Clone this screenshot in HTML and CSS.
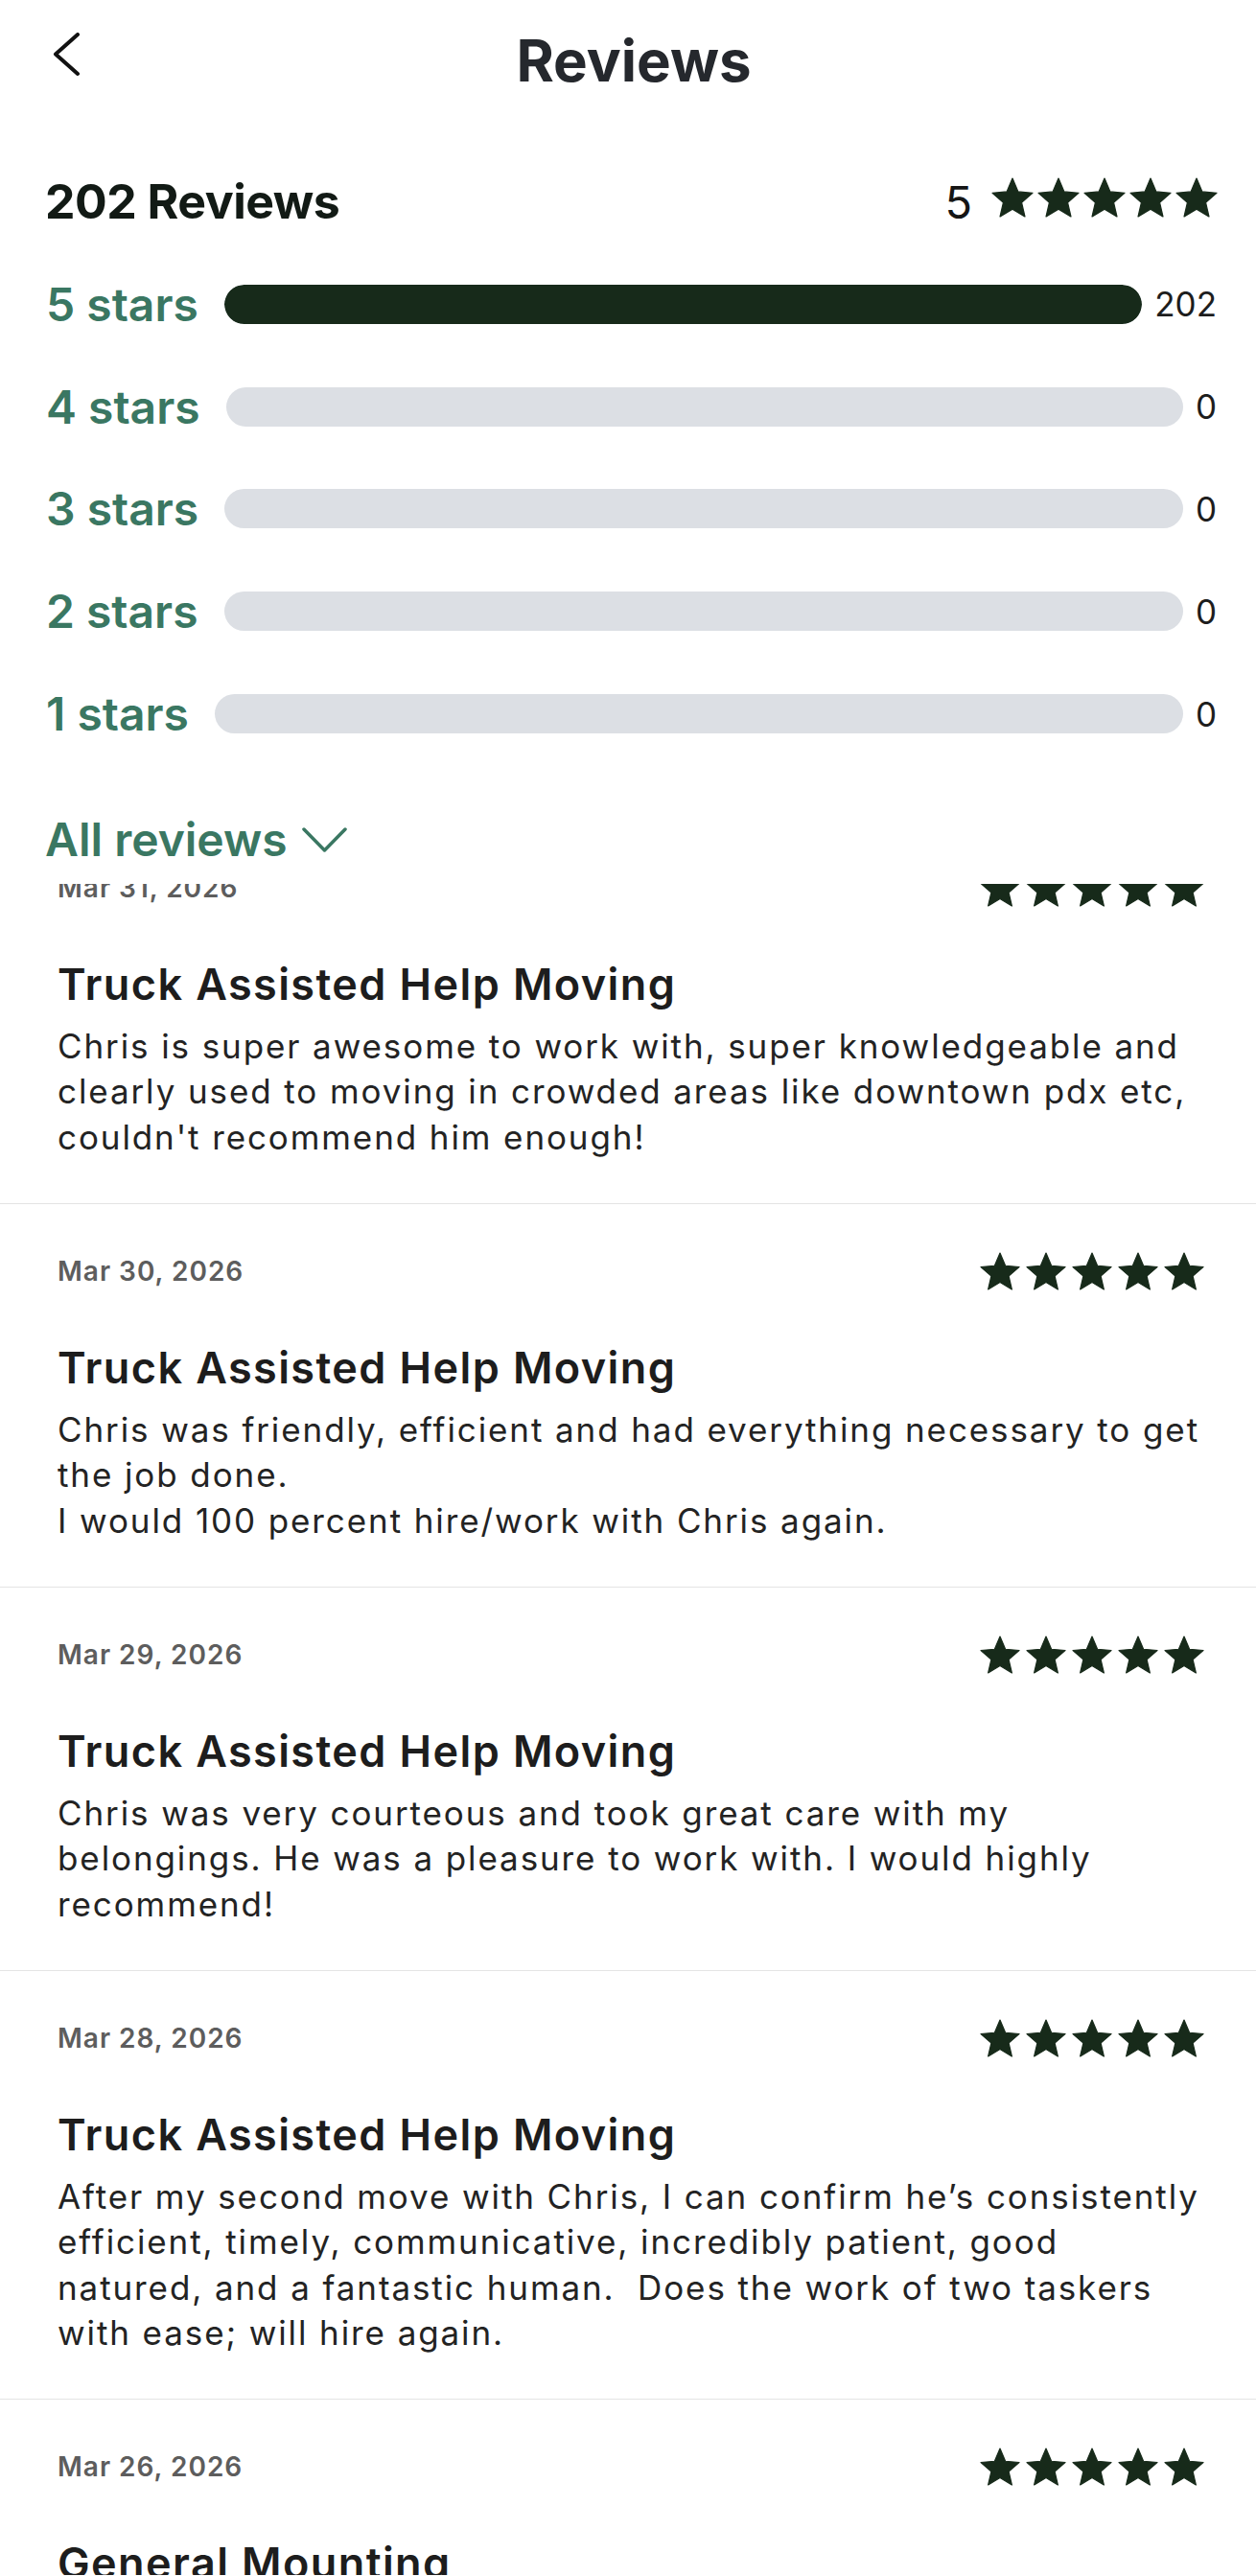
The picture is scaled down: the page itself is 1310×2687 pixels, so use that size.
FILE: index.html
```html
<!DOCTYPE html>
<html lang="en">

<head>
    <meta charset="utf-8" />
    <title>Reviews</title>
    <link rel="stylesheet" href="styles.css">
</head>

<body>
    <div class="page">
        <header class="topbar">
            <svg class="back" width="30" height="46" viewBox="0 0 30 46">
                <polyline points="26,2 3,22.5 26,43" />
            </svg>
            <h1 class="page-title">Reviews</h1>
            <span></span>
        </header>

        <div class="summary">
            <div class="summary-count">202 Reviews</div>
            <div class="summary-score">
                <span class="score-num">5</span>
                <div class="stars big">
                    <svg viewBox="1.5 1.5 21 20"><path d="M12 17.27L18.18 21l-1.64-7.03L22 9.24l-7.19-.61L12 2 9.19 8.63 2 9.24l5.46 4.73L5.82 21z" /></svg>
                    <svg viewBox="1.5 1.5 21 20"><path d="M12 17.27L18.18 21l-1.64-7.03L22 9.24l-7.19-.61L12 2 9.19 8.63 2 9.24l5.46 4.73L5.82 21z" /></svg>
                    <svg viewBox="1.5 1.5 21 20"><path d="M12 17.27L18.18 21l-1.64-7.03L22 9.24l-7.19-.61L12 2 9.19 8.63 2 9.24l5.46 4.73L5.82 21z" /></svg>
                    <svg viewBox="1.5 1.5 21 20"><path d="M12 17.27L18.18 21l-1.64-7.03L22 9.24l-7.19-.61L12 2 9.19 8.63 2 9.24l5.46 4.73L5.82 21z" /></svg>
                    <svg viewBox="1.5 1.5 21 20"><path d="M12 17.27L18.18 21l-1.64-7.03L22 9.24l-7.19-.61L12 2 9.19 8.63 2 9.24l5.46 4.73L5.82 21z" /></svg>
                </div>
            </div>
        </div>

        <div class="breakdown">
            <div class="bar-row">
                <span class="bar-label">5 stars</span>
                <div class="bar"><div class="bar-fill" style="width: 100%"></div></div>
                <span class="bar-count">202</span>
            </div>
            <div class="bar-row">
                <span class="bar-label">4 stars</span>
                <div class="bar"><div class="bar-fill" style="width: 0%"></div></div>
                <span class="bar-count">0</span>
            </div>
            <div class="bar-row">
                <span class="bar-label">3 stars</span>
                <div class="bar"><div class="bar-fill" style="width: 0%"></div></div>
                <span class="bar-count">0</span>
            </div>
            <div class="bar-row">
                <span class="bar-label">2 stars</span>
                <div class="bar"><div class="bar-fill" style="width: 0%"></div></div>
                <span class="bar-count">0</span>
            </div>
            <div class="bar-row">
                <span class="bar-label">1 stars</span>
                <div class="bar"><div class="bar-fill" style="width: 0%"></div></div>
                <span class="bar-count">0</span>
            </div>
        </div>

        <div class="filter">
            <span>All reviews</span>
            <svg class="chev" width="47" height="28" viewBox="0 0 47 28">
                <polyline points="2,3 23.5,25 45,3" />
            </svg>
        </div>

        <div class="list">
            <div class="list-inner">
                <div class="review">
                    <div class="review-top">
                        <span class="review-date">Mar 31, 2026</span>
                        <div class="stars small">
                            <svg viewBox="1.5 1.5 21 20"><path d="M12 17.27L18.18 21l-1.64-7.03L22 9.24l-7.19-.61L12 2 9.19 8.63 2 9.24l5.46 4.73L5.82 21z" /></svg>
                            <svg viewBox="1.5 1.5 21 20"><path d="M12 17.27L18.18 21l-1.64-7.03L22 9.24l-7.19-.61L12 2 9.19 8.63 2 9.24l5.46 4.73L5.82 21z" /></svg>
                            <svg viewBox="1.5 1.5 21 20"><path d="M12 17.27L18.18 21l-1.64-7.03L22 9.24l-7.19-.61L12 2 9.19 8.63 2 9.24l5.46 4.73L5.82 21z" /></svg>
                            <svg viewBox="1.5 1.5 21 20"><path d="M12 17.27L18.18 21l-1.64-7.03L22 9.24l-7.19-.61L12 2 9.19 8.63 2 9.24l5.46 4.73L5.82 21z" /></svg>
                            <svg viewBox="1.5 1.5 21 20"><path d="M12 17.27L18.18 21l-1.64-7.03L22 9.24l-7.19-.61L12 2 9.19 8.63 2 9.24l5.46 4.73L5.82 21z" /></svg>
                        </div>
                    </div>
                    <h2 class="review-title">Truck Assisted Help Moving</h2>
                    <p class="review-body">Chris is super awesome to work with, super knowledgeable and clearly used to moving in crowded areas like downtown pdx etc, couldn't recommend him enough!</p>
                </div>

                <div class="review">
                    <div class="review-top">
                        <span class="review-date">Mar 30, 2026</span>
                        <div class="stars small">
                            <svg viewBox="1.5 1.5 21 20"><path d="M12 17.27L18.18 21l-1.64-7.03L22 9.24l-7.19-.61L12 2 9.19 8.63 2 9.24l5.46 4.73L5.82 21z" /></svg>
                            <svg viewBox="1.5 1.5 21 20"><path d="M12 17.27L18.18 21l-1.64-7.03L22 9.24l-7.19-.61L12 2 9.19 8.63 2 9.24l5.46 4.73L5.82 21z" /></svg>
                            <svg viewBox="1.5 1.5 21 20"><path d="M12 17.27L18.18 21l-1.64-7.03L22 9.24l-7.19-.61L12 2 9.19 8.63 2 9.24l5.46 4.73L5.82 21z" /></svg>
                            <svg viewBox="1.5 1.5 21 20"><path d="M12 17.27L18.18 21l-1.64-7.03L22 9.24l-7.19-.61L12 2 9.19 8.63 2 9.24l5.46 4.73L5.82 21z" /></svg>
                            <svg viewBox="1.5 1.5 21 20"><path d="M12 17.27L18.18 21l-1.64-7.03L22 9.24l-7.19-.61L12 2 9.19 8.63 2 9.24l5.46 4.73L5.82 21z" /></svg>
                        </div>
                    </div>
                    <h2 class="review-title">Truck Assisted Help Moving</h2>
                    <p class="review-body">Chris was friendly, efficient and had everything necessary to get the job done.<br>I would 100 percent hire/work with Chris again.</p>
                </div>

                <div class="review">
                    <div class="review-top">
                        <span class="review-date">Mar 29, 2026</span>
                        <div class="stars small">
                            <svg viewBox="1.5 1.5 21 20"><path d="M12 17.27L18.18 21l-1.64-7.03L22 9.24l-7.19-.61L12 2 9.19 8.63 2 9.24l5.46 4.73L5.82 21z" /></svg>
                            <svg viewBox="1.5 1.5 21 20"><path d="M12 17.27L18.18 21l-1.64-7.03L22 9.24l-7.19-.61L12 2 9.19 8.63 2 9.24l5.46 4.73L5.82 21z" /></svg>
                            <svg viewBox="1.5 1.5 21 20"><path d="M12 17.27L18.18 21l-1.64-7.03L22 9.24l-7.19-.61L12 2 9.19 8.63 2 9.24l5.46 4.73L5.82 21z" /></svg>
                            <svg viewBox="1.5 1.5 21 20"><path d="M12 17.27L18.18 21l-1.64-7.03L22 9.24l-7.19-.61L12 2 9.19 8.63 2 9.24l5.46 4.73L5.82 21z" /></svg>
                            <svg viewBox="1.5 1.5 21 20"><path d="M12 17.27L18.18 21l-1.64-7.03L22 9.24l-7.19-.61L12 2 9.19 8.63 2 9.24l5.46 4.73L5.82 21z" /></svg>
                        </div>
                    </div>
                    <h2 class="review-title">Truck Assisted Help Moving</h2>
                    <p class="review-body">Chris was very courteous and took great care with my belongings. He was a pleasure to work with. I would highly recommend!</p>
                </div>

                <div class="review">
                    <div class="review-top">
                        <span class="review-date">Mar 28, 2026</span>
                        <div class="stars small">
                            <svg viewBox="1.5 1.5 21 20"><path d="M12 17.27L18.18 21l-1.64-7.03L22 9.24l-7.19-.61L12 2 9.19 8.63 2 9.24l5.46 4.73L5.82 21z" /></svg>
                            <svg viewBox="1.5 1.5 21 20"><path d="M12 17.27L18.18 21l-1.64-7.03L22 9.24l-7.19-.61L12 2 9.19 8.63 2 9.24l5.46 4.73L5.82 21z" /></svg>
                            <svg viewBox="1.5 1.5 21 20"><path d="M12 17.27L18.18 21l-1.64-7.03L22 9.24l-7.19-.61L12 2 9.19 8.63 2 9.24l5.46 4.73L5.82 21z" /></svg>
                            <svg viewBox="1.5 1.5 21 20"><path d="M12 17.27L18.18 21l-1.64-7.03L22 9.24l-7.19-.61L12 2 9.19 8.63 2 9.24l5.46 4.73L5.82 21z" /></svg>
                            <svg viewBox="1.5 1.5 21 20"><path d="M12 17.27L18.18 21l-1.64-7.03L22 9.24l-7.19-.61L12 2 9.19 8.63 2 9.24l5.46 4.73L5.82 21z" /></svg>
                        </div>
                    </div>
                    <h2 class="review-title">Truck Assisted Help Moving</h2>
                    <p class="review-body">After my second move with Chris, I can confirm he’s consistently efficient, timely, communicative, incredibly patient, good natured, and a fantastic human.&nbsp; Does the work of two taskers with ease; will hire again.</p>
                </div>

                <div class="review">
                    <div class="review-top">
                        <span class="review-date">Mar 26, 2026</span>
                        <div class="stars small">
                            <svg viewBox="1.5 1.5 21 20"><path d="M12 17.27L18.18 21l-1.64-7.03L22 9.24l-7.19-.61L12 2 9.19 8.63 2 9.24l5.46 4.73L5.82 21z" /></svg>
                            <svg viewBox="1.5 1.5 21 20"><path d="M12 17.27L18.18 21l-1.64-7.03L22 9.24l-7.19-.61L12 2 9.19 8.63 2 9.24l5.46 4.73L5.82 21z" /></svg>
                            <svg viewBox="1.5 1.5 21 20"><path d="M12 17.27L18.18 21l-1.64-7.03L22 9.24l-7.19-.61L12 2 9.19 8.63 2 9.24l5.46 4.73L5.82 21z" /></svg>
                            <svg viewBox="1.5 1.5 21 20"><path d="M12 17.27L18.18 21l-1.64-7.03L22 9.24l-7.19-.61L12 2 9.19 8.63 2 9.24l5.46 4.73L5.82 21z" /></svg>
                            <svg viewBox="1.5 1.5 21 20"><path d="M12 17.27L18.18 21l-1.64-7.03L22 9.24l-7.19-.61L12 2 9.19 8.63 2 9.24l5.46 4.73L5.82 21z" /></svg>
                        </div>
                    </div>
                    <h2 class="review-title">General Mounting</h2>
                    <p class="review-body">Chris did a great job.</p>
                </div>
            </div>
        </div>
    </div>
</body>

</html>
```

FILE: styles.css
```css
html,
body {
    margin: 0;
    height: 2687px;
    overflow: hidden;
    background-color: #fff;
}

body {
    font-family: Inter, "Noto Sans", sans-serif;
    color: #1f1f1f;
}

.page {
    width: 1310px;
}

.topbar {
    display: grid;
    grid-template-columns: 1fr auto 1fr;
    align-items: start;
    padding: 27px 43px 0 55px;
}

.back {
    margin-top: 7px;
}

.back polyline {
    fill: none;
    stroke: #111;
    stroke-width: 4;
    stroke-linecap: round;
    stroke-linejoin: round;
}

.page-title {
    margin: 0;
    font-size: 60px;
    line-height: 72px;
    font-weight: 700;
    color: #25282d;
}

.summary {
    display: flex;
    justify-content: space-between;
    align-items: center;
    height: 60px;
    margin-top: 81px;
    padding: 0 40px 0 47px;
}

.summary-count {
    font-size: 50px;
    font-weight: 700;
    letter-spacing: -0.5px;
    color: #121a15;
}

.summary-score {
    display: flex;
    align-items: center;
}

.score-num {
    font-size: 47px;
    color: #151515;
    margin-right: 20px;
}

.stars {
    display: flex;
}

.stars path {
    fill: #172a1a;
    stroke: #172a1a;
    stroke-width: 0.6;
    stroke-linejoin: round;
}

.stars.big {
    gap: 4px;
    margin-bottom: 9px;
}

.stars.big svg {
    width: 44px;
    height: 42px;
}

.stars.small {
    gap: 6px;
}

.stars.small svg {
    width: 42px;
    height: 40px;
}

.breakdown {
    margin-top: 24px;
}

.bar-row {
    display: flex;
    align-items: center;
    height: 106.8px;
    padding: 0 41px 0 48px;
}

.bar-label {
    font-size: 48px;
    font-weight: 600;
    color: #3a7762;
    margin-right: 27px;
}

.bar {
    flex: 1;
    height: 41px;
    border-radius: 21px;
    background-color: #dcdfe4;
    overflow: hidden;
}

.bar-fill {
    height: 100%;
    background-color: #172a1a;
    border-radius: 21px;
}

.bar-count {
    font-size: 35px;
    color: #1d1d1d;
    margin-left: 13px;
}

.filter {
    display: flex;
    align-items: center;
    gap: 15px;
    height: 58px;
    margin-top: 49px;
    padding-left: 47px;
    font-size: 48px;
    font-weight: 600;
    color: #3a7762;
}

.chev polyline {
    fill: none;
    stroke: #3a7762;
    stroke-width: 3.5;
    stroke-linecap: round;
    stroke-linejoin: round;
}

.list {
    margin-top: 17px;
    height: 1764px;
    overflow: hidden;
}

.list-inner {
    margin-top: -66px;
}

.review {
    padding: 49px 54px 44.5px 60px;
    border-bottom: 1px solid #e4e4e4;
}

.review-top {
    display: flex;
    justify-content: space-between;
    align-items: center;
    height: 42px;
}

.review-date {
    font-size: 28px;
    font-weight: 600;
    letter-spacing: 1px;
    color: #5d5d5d;
}

.review-title {
    margin: 52px 0 0;
    font-size: 45px;
    line-height: 56px;
    font-weight: 600;
    letter-spacing: 1.4px;
    color: #1d1d1d;
}

.review-body {
    margin: 13px 0 0;
    font-size: 35px;
    line-height: 47.5px;
    letter-spacing: 1.9px;
    color: #232323;
}
```
